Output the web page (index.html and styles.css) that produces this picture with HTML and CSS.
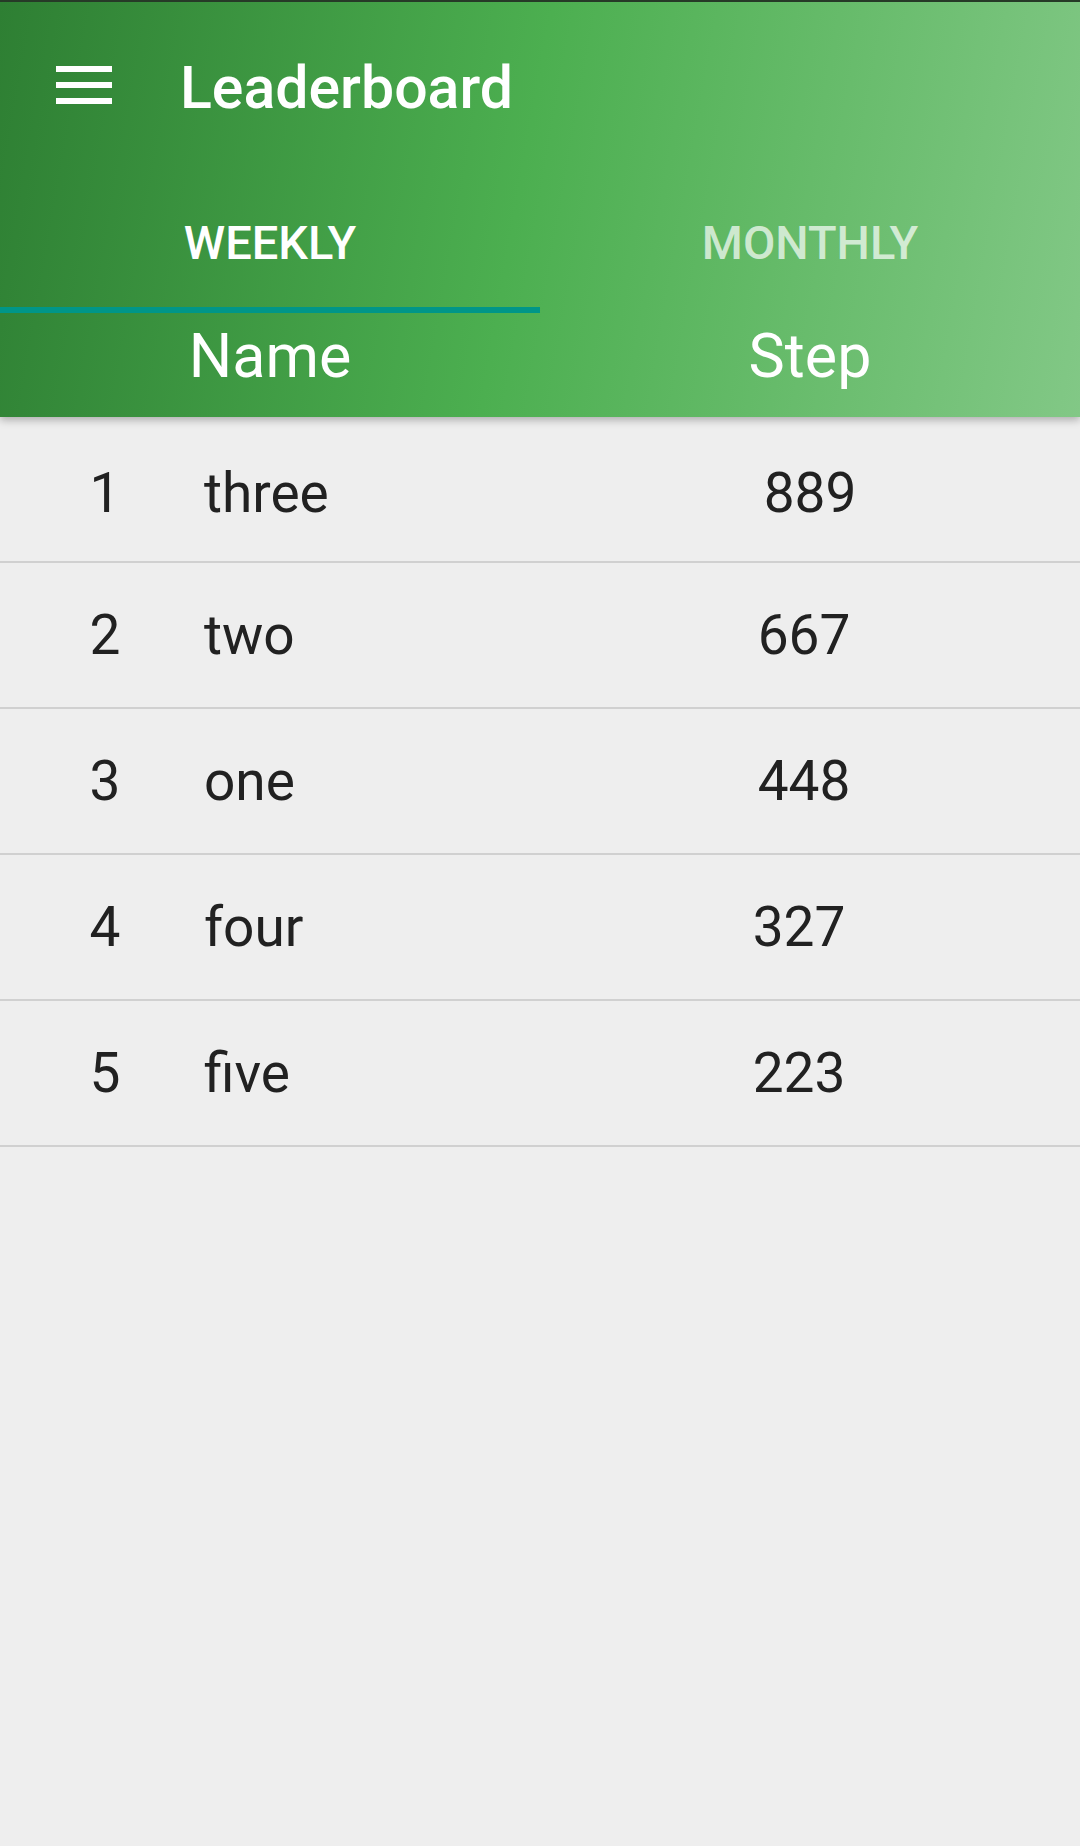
FILE: index.html
```html
<!DOCTYPE html>
<html>
<head>
<meta charset="utf-8">
<link rel="stylesheet" href="styles.css">
</head>
<body>
<div class="app">
  <header class="appbar">
    <div class="toolbar">
      <svg class="menu" viewBox="0 0 56 38" width="56" height="38">
        <rect x="0" y="0" width="56" height="6" fill="#fff"/>
        <rect x="0" y="16" width="56" height="6" fill="#fff"/>
        <rect x="0" y="32" width="56" height="6" fill="#fff"/>
      </svg>
      <h1 class="title">Leaderboard</h1>
    </div>
    <div class="tabs">
      <div class="tab tab-active">WEEKLY</div>
      <div class="tab">MONTHLY</div>
    </div>
    <div class="cols">
      <div class="col">Name</div>
      <div class="col">Step</div>
    </div>
  </header>
  <ul class="list">
    <li class="row"><span class="rank">1</span><span class="name">three</span><span class="steps steps-r">889</span></li>
    <li class="row"><span class="rank">2</span><span class="name">two</span><span class="steps">667</span></li>
    <li class="row"><span class="rank">3</span><span class="name">one</span><span class="steps">448</span></li>
    <li class="row"><span class="rank">4</span><span class="name">four</span><span class="steps steps-l">327</span></li>
    <li class="row"><span class="rank">5</span><span class="name">five</span><span class="steps steps-l">223</span></li>
  </ul>
</div>
</body>
</html>
```
FILE: styles.css
```css
html, body {
  margin: 0;
  padding: 0;
}
body {
  width: 1080px;
  height: 1846px;
  background: #eeeeee;
  font-family: Roboto, "Noto Sans", sans-serif;
  overflow: hidden;
}
.app {
  width: 1080px;
}
.appbar {
  position: relative;
  z-index: 1;
  height: 415px;
  border-top: 2px solid #263a27;
  background: linear-gradient(100deg, #2e7f33 0%, #4caf50 48%, #82c886 100%);
  box-shadow: 0 3px 8px rgba(0, 0, 0, 0.28);
  color: #fff;
}
.toolbar {
  height: 178px;
  display: flex;
  align-items: center;
}
.menu {
  display: block;
  margin-left: 56px;
  margin-top: -12px;
  flex: none;
}
.title {
  margin: 0 0 8px 68px;
  font-size: 59px;
  font-weight: 500;
  line-height: 1;
  letter-spacing: 0;
}
.tabs {
  display: flex;
  height: 133px;
}
.tab {
  flex: 1;
  display: flex;
  align-items: center;
  justify-content: center;
  font-size: 47px;
  font-weight: 500;
  color: rgba(255, 255, 255, 0.7);
  border-bottom: 6px solid transparent;
  padding-bottom: 2px;
}
.tab-active {
  color: #fff;
  border-bottom-color: #009688;
}
.cols {
  display: flex;
  height: 104px;
}
.col {
  flex: 1;
  display: flex;
  align-items: center;
  justify-content: center;
  font-size: 61px;
  font-weight: 400;
  padding-bottom: 18px;
}
.list {
  list-style: none;
  margin: 0;
  padding: 0;
}
.row {
  display: flex;
  align-items: center;
  height: 144px;
  border-bottom: 2px solid #d0d0d0;
  color: #212121;
  font-size: 55px;
  font-weight: 400;
  padding-top: 8px;
  box-sizing: content-box;
  margin-top: -8px;
}
.row:first-child {
  margin-top: 0;
  height: 136px;
}
.rank {
  width: 190px;
  padding-left: 10px;
  text-align: center;
}
.name {
  flex: 1;
  padding-left: 4px;
}
.steps {
  width: 540px;
  padding-right: 12px;
  text-align: center;
  box-sizing: border-box;
}
.steps-r {
  padding-right: 0;
}
.steps-l {
  padding-right: 22px;
}
```
